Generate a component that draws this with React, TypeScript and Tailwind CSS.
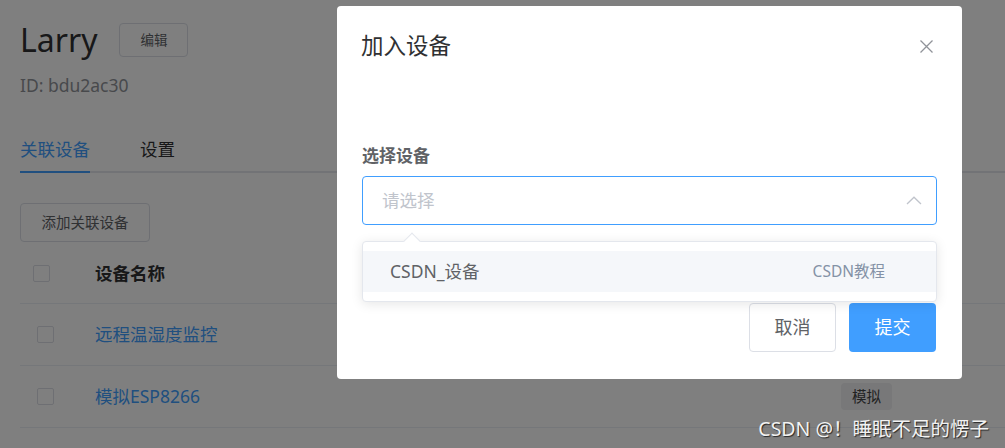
const rows = [
    { name: '远程温湿度监控', tag: '' },
    { name: '模拟ESP8266', tag: '模拟' },
]

const Checkbox = ({ className }: { className?: string }) => (
    <span className={`block h-[17px] w-[17px] rounded-[2px] border border-[#dcdfe6] bg-white ${className ?? ''}`} />
)

const DevicePage = () => (
    <div className="pl-5 pt-[23px]">
        {/* Header */}
        <div className="flex h-[34px] items-center gap-[22px]">
            <h1 className="text-[32px] leading-none text-[#303133]">Larry</h1>
            <button className="h-[34px] w-[69px] rounded border border-[#dcdfe6] bg-white text-[13.5px] text-[#606266]">
                编辑
            </button>
        </div>
        <p className="mt-[16px] text-[17.5px] leading-6 text-[#909399]">ID: bdu2ac30</p>

        {/* Tabs */}
        <div className="mt-[30px] flex h-[46px] border-b-2 border-[#e4e7ed] text-[17.5px]">
            <div className="-mb-[2px] flex items-center border-b-2 border-[#409eff] text-[#409eff]">关联设备</div>
            <div className="ml-[50px] flex items-center text-[#303133]">设置</div>
        </div>

        <button className="mt-[30px] h-[39px] w-[130px] rounded border border-[#dcdfe6] bg-white text-[14.5px] text-[#606266]">
            添加关联设备
        </button>

        {/* Table */}
        <div className="mt-[1px]">
            <div className="flex h-[61px] items-center border-b border-[#ebeef5]">
                <div className="w-[75px]">
                    <Checkbox className="ml-[13px]" />
                </div>
                <div className="text-[17.5px] font-bold text-[#303133]">设备名称</div>
            </div>
            {rows.map((row) => (
                <div key={row.name} className="flex h-[62px] items-center border-b border-[#ebeef5]">
                    <div className="w-[75px]">
                        <Checkbox className="ml-[17px]" />
                    </div>
                    <div className="w-[746px] text-[17.5px] text-[#409eff]">{row.name}</div>
                    {row.tag && (
                        <span className="flex h-[27px] w-[51px] items-center justify-center rounded bg-[#f0f0f2] text-[14.5px] text-[#444]">
                            {row.tag}
                        </span>
                    )}
                </div>
            ))}
        </div>
    </div>
)

const AddDeviceDialog = () => (
    <div className="h-[373px] w-[625px] rounded bg-white">
        <div className="flex items-center justify-between pl-6 pr-[28px] pt-[25px]">
            <h2 className="text-[22.5px] leading-[30px] text-[#303133]">加入设备</h2>
            <svg width="15" height="15" viewBox="0 0 15 15" className="text-[#909399]">
                <path d="M1.5 1.5 L13.5 13.5 M13.5 1.5 L1.5 13.5" stroke="currentColor" strokeWidth="1.3" fill="none" />
            </svg>
        </div>

        <div className="px-[25px]">
            <label className="mt-[83px] block text-[17px] font-bold leading-6 text-[#606266]">选择设备</label>
            <div className="relative mt-[8px]">
                <div className="flex h-[49px] items-center justify-between rounded border border-[#409eff] pl-[19px] pr-[14px]">
                    <span className="text-[17.5px] text-[#c0c4cc]">请选择</span>
                    <svg width="16" height="9" viewBox="0 0 16 9" className="text-[#c0c4cc]">
                        <path d="M1 8 L8 1.2 L15 8" stroke="currentColor" strokeWidth="1.3" fill="none" />
                    </svg>
                </div>

                {/* Dropdown */}
                <div className="absolute left-0 right-0 top-[65px] z-10 rounded border border-[#e4e7ed] bg-white py-[9px] shadow-[0_2px_12px_rgba(0,0,0,0.1)]">
                    <span className="absolute -top-[7px] left-[43px] h-3 w-3 rotate-45 border-l border-t border-[#e4e7ed] bg-white" />
                    <div className="flex h-[41px] items-center justify-between bg-[#f5f7fa] pl-[27px] pr-[51px]">
                        <span className="text-[17.5px] text-[#606266]">CSDN_设备</span>
                        <span className="text-[15.5px] text-[#8492a6]">CSDN教程</span>
                    </div>
                </div>
            </div>

            <div className="mt-[78px] flex justify-end gap-[13px] pr-px">
                <button className="h-[49px] w-[87px] rounded border border-[#dcdfe6] bg-white text-[18px] text-[#606266]">
                    取消
                </button>
                <button className="h-[49px] w-[87px] rounded bg-[#409eff] text-[18px] text-white">提交</button>
            </div>
        </div>
    </div>
)

const App = () => {
    return (
        <div className="relative h-[448px] w-[1005px] overflow-hidden bg-white font-['Noto_Sans','Noto_Sans_CJK_SC',sans-serif]">
            <DevicePage />

            {/* Modal overlay */}
            <div className="absolute inset-0 bg-black/50 pl-[337px] pt-[6px]">
                <AddDeviceDialog />
            </div>

            {/* Watermark */}
            <span className="absolute bottom-[5px] right-[16px] text-[19.5px] text-[#f2f2f2] [text-shadow:1px_1px_1px_rgba(0,0,0,0.7)]">
                CSDN @！睡眠不足的愣子
            </span>
        </div>
    )
}

export default App
